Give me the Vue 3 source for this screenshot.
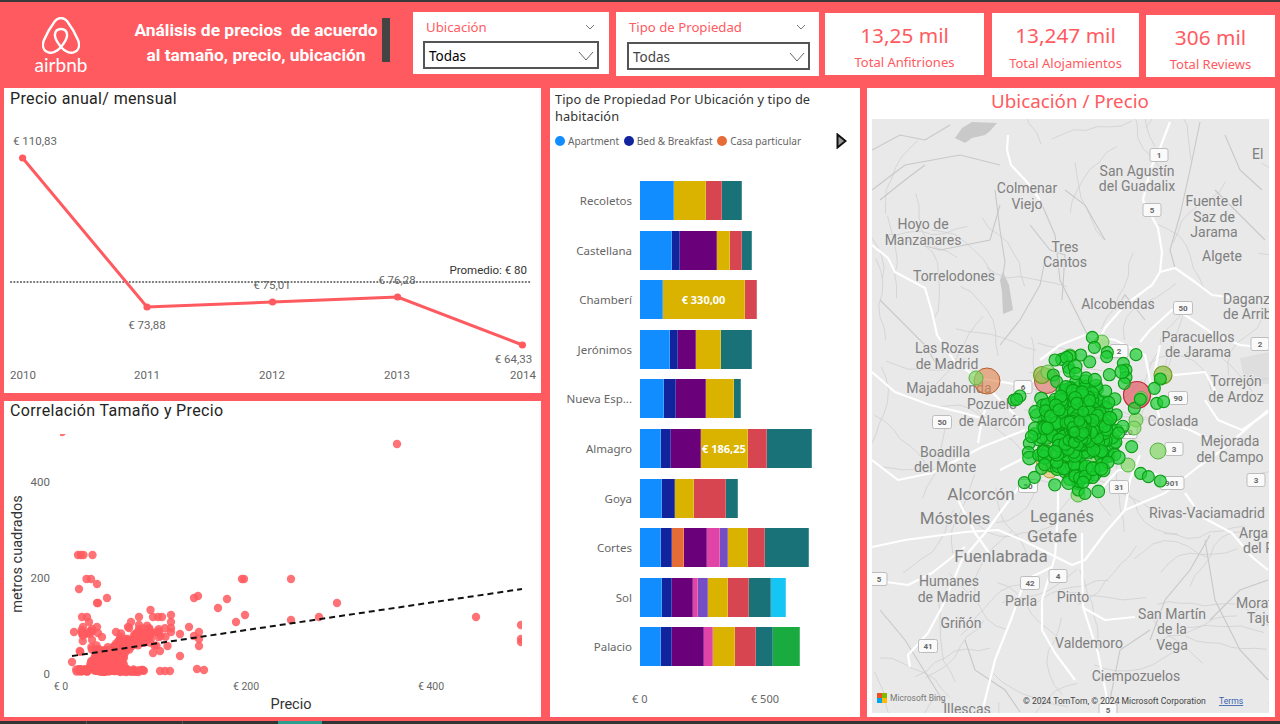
<template>
  <div class="page">
    <header class="header">
      <div class="brand">
        <div class="logo">
          <svg class="belo" viewBox="0 0 38 37" width="38" height="37">
            <path d="M19 30C15 35 9 37 5.5 35C1 33 0 28 2 23C5 16 10 8 13 4C15 1.5 17 1 19 1C21 1 23 1.5 25 4C28 8 33 16 36 23C38 28 37 33 32.5 35C29 37 23 35 19 30C14 24 12.5 20 13 17C13.5 13.5 16 12 19 12C22 12 24.5 13.5 25 17C25.5 20 24 24 19 30Z" />
          </svg>
          <span class="wordmark">airbnb</span>
        </div>
        <h1 class="title">Análisis de precios&nbsp; de acuerdo<br />al tamaño, precio, ubicación</h1>
        <div class="dark-bar"></div>
      </div>

      <div class="slicer slicer-a">
        <div class="slicer-head">
          <span>Ubicación</span>
          <svg viewBox="0 0 10 6" width="10" height="6"><polyline points="1,1 5,5 9,1" /></svg>
        </div>
        <div class="slicer-box">
          <span class="strong">Todas</span>
          <svg viewBox="0 0 16 10" width="16" height="10"><polyline points="1,1 8,9 15,1" /></svg>
        </div>
      </div>
      <div class="slicer slicer-b">
        <div class="slicer-head">
          <span>Tipo de Propiedad</span>
          <svg viewBox="0 0 10 6" width="10" height="6"><polyline points="1,1 5,5 9,1" /></svg>
        </div>
        <div class="slicer-box">
          <span>Todas</span>
          <svg viewBox="0 0 16 10" width="16" height="10"><polyline points="1,1 8,9 15,1" /></svg>
        </div>
      </div>

      <div v-for="k in kpis" :key="k.label" class="kpi" :class="k.cls">
        <div class="kpi-value">{{ k.value }}</div>
        <div class="kpi-label">{{ k.label }}</div>
      </div>
    </header>

    <main class="body">
      <div class="left">
        <section class="panel panel-line">
          <h2 class="din-title">Precio anual/ mensual</h2>
          <svg class="chart" viewBox="4 110 537 283" width="537" height="283">
            <line x1="11" y1="282" x2="531" y2="282" class="avg" />
            <text x="527" y="274" text-anchor="end" class="avg-text">Promedio: € 80</text>
            <polyline :points="linePoints" class="trend" />
            <circle v-for="p in lineData" :key="p.year" :cx="p.x" :cy="p.y" r="3.6" fill="#ff5a5f" />
            <text v-for="p in lineData" :key="'v' + p.year" :x="p.lx" :y="p.ly" text-anchor="middle" class="tick">{{ p.label }}</text>
            <text v-for="p in lineData" :key="'y' + p.year" :x="p.yx" y="379" text-anchor="middle" class="tick">{{ p.year }}</text>
          </svg>
        </section>

        <section class="panel panel-scatter">
          <h2 class="din-title scatter-title">Correlación Tamaño y Precio</h2>
          <svg class="chart" viewBox="4 423 537 294" width="537" height="294">
            <defs>
              <clipPath id="plot-clip"><rect x="60" y="434" width="462" height="245" /></clipPath>
            </defs>
            <g clip-path="url(#plot-clip)">
              <circle v-for="(p, i) in scatter" :key="i" :cx="p[0]" :cy="p[1]" r="4.2" class="dot" />
            </g>
            <line x1="72" y1="656" x2="522" y2="589" class="fit" />
            <text x="50" y="486" text-anchor="end" class="tick">400</text>
            <text x="50" y="582" text-anchor="end" class="tick">200</text>
            <text x="50" y="678" text-anchor="end" class="tick">0</text>
            <text x="61" y="690" text-anchor="middle" class="tick small">€ 0</text>
            <text x="246" y="690" text-anchor="middle" class="tick small">€ 200</text>
            <text x="431" y="690" text-anchor="middle" class="tick small">€ 400</text>
            <text x="291" y="709" text-anchor="middle" class="axis-name">Precio</text>
            <text transform="translate(22 554) rotate(-90)" text-anchor="middle" class="axis-name">metros cuadrados</text>
          </svg>
        </section>
      </div>

      <section class="panel panel-bars">
        <h2 class="bars-title">Tipo de Propiedad Por Ubicación y tipo de habitación</h2>
        <div class="legend">
          <span v-for="l in legend" :key="l.name" class="legend-item">
            <i class="legend-dot" :style="{ background: l.color }"></i>{{ l.name }}
          </span>
          <svg class="legend-next" viewBox="0 0 11 16" width="11" height="16">
            <path d="M1.5 1.5L9.5 8L1.5 14.5Z" />
          </svg>
        </div>
        <div class="rows">
          <div v-for="r in rows" :key="r.name" class="row">
            <span class="row-name">{{ r.name }}</span>
            <div class="stack">
              <div
                v-for="(s, i) in r.segs"
                :key="i"
                class="seg"
                :style="{ width: s[1] + 'px', background: colors[s[0]] }"
              >{{ s[2] }}</div>
            </div>
          </div>
        </div>
        <div class="bars-axis">
          <span>€ 0</span>
          <span>€ 500</span>
        </div>
      </section>

      <section class="panel panel-map">
        <h2 class="map-title">Ubicación / Precio</h2>
        <svg class="map" viewBox="872 119 397 594" width="397" height="594">
          <rect x="872" y="119" width="397" height="594" fill="#e9e9e9" />
          <polygon points="1240,358 1269,352 1269,384 1245,384" fill="#dedede" />
          <polygon points="955,138 962,128 972,122 997,123 990,131 985,135 972,138 965,143" fill="#c9c9c9" />
          <polygon points="1003,272 1009,285 1013,310 1003,314 1002,292 1000,280" fill="#c9c9c9" />
          <polyline v-for="(r, i) in walkers" :key="'w' + i" :points="r" class="road-faint" />
          <polyline v-for="(r, i) in minorRoads" :key="'m' + i" :points="r" class="road-minor" />
          <polyline v-for="(r, i) in majorRoads" :key="'r' + i" :points="r" class="road-major" />

          <text
            v-for="l in mapLabels"
            :key="l[0] + l[2]"
            :x="l[1]"
            :y="l[2]"
            :font-size="l[3]"
            :text-anchor="l[4] || 'middle'"
            class="place"
          >{{ l[0] }}</text>

          <g v-for="s in shields" :key="s[0] + '-' + s[1]">
            <rect :x="s[1] - s[3] / 2" :y="s[2] - 6.5" :width="s[3]" height="13" rx="2" class="shield" />
            <text :x="s[1]" :y="s[2] + 3" text-anchor="middle" class="shield-text">{{ s[0] }}</text>
          </g>

          <circle v-for="(c, i) in bubbles" :key="'b' + i" :cx="c[0]" :cy="c[1]" :r="c[2]" :class="c[3]" />

          <rect x="877" y="693" width="5" height="5" fill="#f25022" />
          <rect x="882" y="693" width="5" height="5" fill="#7fba00" />
          <rect x="877" y="698" width="5" height="5" fill="#00a4ef" />
          <rect x="882" y="698" width="5" height="5" fill="#ffb900" />
          <text x="890" y="701" class="bing">Microsoft Bing</text>
          <text x="1023" y="704" class="copyright">© 2024 TomTom, © 2024 Microsoft Corporation</text>
          <text x="1219" y="704" class="terms">Terms</text>
        </svg>
      </section>
    </main>

    <footer class="strip">
      <span class="tab-sep first"></span>
      <span class="tab-sep second"></span>
      <span class="tab-active"></span>
    </footer>
  </div>
</template>

<script setup>
const kpis = [
  { value: '13,25 mil', label: 'Total Anfitriones', cls: 'kpi-a' },
  { value: '13,247 mil', label: 'Total Alojamientos', cls: 'kpi-b' },
  { value: '306 mil', label: 'Total Reviews', cls: 'kpi-c' }
]

const lineData = [
  { year: 2010, x: 22.6, y: 158, label: '€ 110,83', lx: 35, ly: 145, yx: 23 },
  { year: 2011, x: 147, y: 307, label: '€ 73,88', lx: 147, ly: 329, yx: 147 },
  { year: 2012, x: 272.5, y: 302, label: '€ 75,01', lx: 272, ly: 289, yx: 272 },
  { year: 2013, x: 397.6, y: 297, label: '€ 76,28', lx: 397, ly: 284, yx: 397 },
  { year: 2014, x: 522.4, y: 345, label: '€ 64,33', lx: 513.5, ly: 363, yx: 523 }
]
const linePoints = lineData.map(p => p.x + ',' + p.y).join(' ')

const colors = {
  blue: '#118dff',
  navy: '#12239e',
  orange: '#e66c37',
  purple: '#6b007b',
  pink: '#e044a7',
  violet: '#744ec2',
  yellow: '#d9b300',
  red: '#d64550',
  teal: '#197278',
  cyan: '#15c6f4',
  green: '#1aab40'
}

const legend = [
  { name: 'Apartment', color: colors.blue },
  { name: 'Bed & Breakfast', color: colors.navy },
  { name: 'Casa particular', color: colors.orange }
]

const rows = [
  { name: 'Recoletos', segs: [['blue', 33.7], ['yellow', 32], ['red', 16], ['teal', 20.3]] },
  { name: 'Castellana', segs: [['blue', 32], ['navy', 8], ['purple', 37.3], ['yellow', 13], ['red', 12], ['teal', 9.7]] },
  { name: 'Chamberí', segs: [['blue', 22.7], ['yellow', 82.7, '€ 330,00'], ['red', 12]] },
  { name: 'Jerónimos', segs: [['blue', 29.7], ['navy', 8.3], ['purple', 17.7], ['yellow', 25], ['teal', 31]] },
  { name: 'Nueva Esp...', segs: [['blue', 24.3], ['navy', 11.7], ['purple', 29.7], ['yellow', 28], ['teal', 7]] },
  { name: 'Almagro', segs: [['blue', 21], ['navy', 10.3], ['purple', 30], ['yellow', 46.3, '€ 186,25'], ['red', 19.7], ['teal', 44.7]] },
  { name: 'Goya', segs: [['blue', 21.7], ['navy', 13], ['yellow', 19], ['red', 32], ['teal', 12.3]] },
  { name: 'Cortes', segs: [['blue', 21], ['navy', 10.7], ['orange', 12.3], ['purple', 22.7], ['pink', 13.7], ['violet', 7.7], ['yellow', 20], ['red', 17.3], ['teal', 43.7]] },
  { name: 'Sol', segs: [['blue', 21.7], ['navy', 10.3], ['purple', 20.7], ['pink', 5.3], ['violet', 9.7], ['yellow', 20.3], ['red', 20.7], ['teal', 22], ['cyan', 15.3]] },
  { name: 'Palacio', segs: [['blue', 20.7], ['navy', 11.3], ['purple', 31.7], ['pink', 9.3], ['yellow', 22], ['red', 20.7], ['teal', 17.3], ['green', 27.3]] }
]

function seeded(seed) {
  return () => {
    seed = (seed + 0x6d2b79f5) | 0
    let t = Math.imul(seed ^ (seed >>> 15), 1 | seed)
    t = (t + Math.imul(t ^ (t >>> 7), 61 | t)) ^ t
    return ((t ^ (t >>> 14)) >>> 0) / 4294967296
  }
}

// scatter: the points that stand alone, then the dense part near the origin
const scatter = [
  [62, 432], [397, 444], [92.5, 555], [78, 555], [81, 555], [83.5, 555], [86.5, 579], [91, 579], [97, 584], [79, 589],
  [107, 598], [97, 603], [98, 603], [198, 596], [194, 598], [227, 599], [218, 608], [242, 579], [244, 579], [291, 579],
  [245, 615], [236, 622], [291, 620], [319, 617], [337, 603], [476, 617], [521, 625], [521, 639], [521, 642],
  [171, 615], [171, 622], [171, 628], [171, 632], [180, 634], [189, 627], [199, 632], [194, 636], [199, 639], [199, 646],
  [180, 656], [160, 651], [153, 653], [167.5, 646], [197, 669], [204, 670], [160, 671], [165, 671], [170, 671],
  [150.5, 610], [139, 617], [153, 617], [158, 617], [162, 617], [131, 622], [116, 632], [102, 637], [74, 632], [82, 617],
  [87, 617], [89, 622], [83, 627], [97, 627], [92, 629], [139, 625], [139, 629], [128, 627], [72, 662]
]
{
  const r = seeded(11)
  for (let i = 0; i < 90; i++) scatter.push([76 + r() * 68, 669 + r() * 3])
  for (let i = 0; i < 150; i++) {
    const x = 90 + r() * 62
    scatter.push([x, 667 - (x - 90) * 0.55 - r() * 12 + r() * 8])
  }
  for (let i = 0; i < 70; i++) scatter.push([94 + r() * 30, 648 + r() * 22])
  for (let i = 0; i < 18; i++) scatter.push([78 + r() * 22, 630 + r() * 22])
  for (let i = 0; i < 24; i++) scatter.push([118 + r() * 48, 628 + r() * 18])
}

const majorRoads = [
  '1170,122 1165,135 1160,148 1150,170 1143,200 1158,228 1162,252 1160,272 1152,285 1125,305 1105,328 1098,342',
  '1008,135 1007,150 1011,165 1027,182 1040,200',
  '872,245 888,258 895,272 925,288 932,312 937,335 955,362 978,378 1020,385 1045,378',
  '1140,342 1150,330 1172,310 1185,315 1215,335 1240,345 1269,348',
  '1160,272 1175,268 1195,282 1212,295 1235,298 1268,302',
  '1040,360 1060,345 1085,335 1115,340 1145,355 1150,380 1160,420 1190,430 1210,440',
  '1082,533 1082,563 1083,607 1098,653 1106,693 1108,712',
  '872,547 905,540 965,532 998,530 1022,540 1072,565 1085,560 1105,533 1125,510 1165,493 1198,467 1222,450 1268,410',
  '872,460 898,480 932,473 982,447 1025,430',
  '910,667 908,655 928,633 942,607 962,560 985,533 1022,483',
  '1058,483 1058,510 1055,557 1042,600 1042,630 1055,653 1075,680',
  '982,712 995,660 1012,617 1025,580 1052,567',
  '1082,607 1105,620 1135,617',
  '958,500 975,533 992,557',
  '872,580 908,585 932,573 965,547',
  '1185,493 1202,517 1232,533 1252,557 1268,570',
  '1205,400 1218,420 1242,430 1268,412',
  '978,443 982,420 988,400',
  '872,372 895,392 930,405 960,412 988,420',
  '1100,490 1118,470 1145,470 1170,480',
  '1125,510 1130,480 1140,455',
  '1000,470 1030,455 1050,455',
  '985,385 1000,400 1020,420',
  '1160,345 1155,370 1175,375 1205,372 1220,400'
]
const minorRoads = [
  '872,150 900,135 925,140 950,125',
  '872,190 905,165 960,155 1000,165',
  '880,200 905,180 925,165',
  '995,190 1000,230 1005,262 1003,275',
  '1040,200 1055,235 1060,280 1075,310 1090,340',
  '1030,225 1050,250 1065,255 1062,300',
  '1065,190 1085,205 1105,240',
  '1200,122 1190,170 1180,215 1170,250 1175,268',
  '1225,135 1240,170 1262,190',
  '1215,190 1235,210 1265,240',
  '1000,345 1020,320 1040,285 1045,260',
  '880,300 900,320 925,345 940,370',
  '905,240 940,250 990,240 1000,205',
  '1115,310 1125,295 1145,320',
  '1150,640 1165,600 1190,570 1210,535',
  '1210,620 1240,590 1268,580',
  '1110,700 1120,650 1150,630',
  '880,610 905,640 930,680 950,712',
  '965,640 975,670 1005,690 1020,712',
  '1205,540 1215,600 1240,650 1268,680'
]

const walkers = []
{
  const r = seeded(77)
  for (let i = 0; i < 95; i++) {
    let x = 872 + r() * 397
    let y = 119 + r() * 594
    let a = r() * 6.28
    const pts = []
    for (let j = 0; j < 8; j++) {
      pts.push(x.toFixed(1) + ',' + y.toFixed(1))
      a += (r() - 0.5) * 0.9
      x += Math.cos(a) * 12
      y += Math.sin(a) * 12
    }
    walkers.push(pts.join(' '))
  }
}

const mapLabels = [
  ['El', 1252, 159, 14, 'start'],
  ['San Agustín', 1137, 176, 14],
  ['del Guadalix', 1137, 191, 14],
  ['Colmenar', 1027, 193, 14],
  ['Viejo', 1027, 209, 14],
  ['Hoyo de', 923, 229, 14],
  ['Manzanares', 923, 245, 14],
  ['Fuente el', 1214, 206, 14],
  ['Saz de', 1214, 222, 14],
  ['Jarama', 1214, 237, 14],
  ['Tres', 1065, 252, 14],
  ['Cantos', 1065, 267, 14],
  ['Torrelodones', 954, 281, 14],
  ['Algete', 1222, 261, 14],
  ['Alcobendas', 1118, 309, 14],
  ['Daganzo', 1223, 304, 14, 'start'],
  ['de Arriba', 1223, 319, 14, 'start'],
  ['Paracuellos', 1198, 342, 14],
  ['de Jarama', 1198, 357, 14],
  ['Las Rozas', 947, 353, 14],
  ['de Madrid', 947, 369, 14],
  ['Majadahonda', 949, 393, 14],
  ['Torrejón', 1236, 386, 14],
  ['de Ardoz', 1236, 402, 14],
  ['Pozuelo', 992, 409, 14],
  ['de Alarcón', 992, 426, 14],
  ['Coslada', 1173, 426, 14],
  ['Madrid', 1037, 433, 18, 'start'],
  ['Mejorada', 1230, 446, 14],
  ['del Campo', 1230, 462, 14],
  ['Boadilla', 945, 457, 14],
  ['del Monte', 945, 472, 14],
  ['Alcorcón', 981, 500, 17],
  ['Móstoles', 955, 524, 17],
  ['Leganés', 1062, 522, 17],
  ['Getafe', 1052, 542, 17],
  ['Fuenlabrada', 1001, 562, 17],
  ['Rivas-Vaciamadrid', 1149, 518, 14, 'start'],
  ['Arganda', 1239, 538, 14, 'start'],
  ['del Rey', 1243, 553, 14, 'start'],
  ['Humanes', 949, 586, 14],
  ['de Madrid', 949, 602, 14],
  ['Parla', 1021, 606, 14],
  ['Pinto', 1073, 602, 14],
  ['Griñón', 961, 628, 14],
  ['San Martín', 1172, 619, 14],
  ['de la', 1172, 634, 14],
  ['Vega', 1172, 650, 14],
  ['Valdemoro', 1089, 648, 14],
  ['Morata', 1236, 608, 14, 'start'],
  ['Tajuña', 1247, 623, 14, 'start'],
  ['Ciempozuelos', 1136, 681, 14],
  ['Illescas', 967, 714, 14]
]

const shields = [
  ['1', 1159, 155, 18], ['5', 1152, 210, 18], ['50', 1183, 308, 19], ['2', 1260, 344, 18], ['2', 1119, 351, 18],
  ['6', 1023, 387, 18], ['90', 1178, 398, 19], ['50', 942, 422, 19], ['3', 1174, 449, 18], ['3', 1256, 480, 18],
  ['31', 1119, 487, 19], ['901', 1172, 483, 24], ['50', 1028, 486, 19], ['5', 879, 579, 16], ['42', 1030, 583, 19],
  ['4', 1058, 576, 18], ['41', 928, 646, 19], ['5', 1108, 710, 18], ['20', 1128, 432, 18]
]

// bubbles: coloured ones at the bottom, loose green ones read off the picture, then the city cluster
const bubbles = [
  [987, 381, 13, 'b-salmon'], [1047, 381, 12.5, 'b-red'], [1137, 395, 13.5, 'b-crimson'], [1053, 415, 10, 'b-yellow'],
  [1048, 460, 12, 'b-yellow'], [1050, 470, 8, 'b-yellow'], [1163, 375, 9, 'b-olive'], [1042, 375, 8.5, 'b-olive'],
  [976, 378, 7, 'b-light'], [1048, 372, 7, 'b-light'], [1158, 451, 8, 'b-light'], [1128, 465, 7, 'b-light'],
  [1136, 420, 7, 'b-light'], [1134, 428, 7, 'b-light'], [1102, 342, 7, 'b-light'], [1070, 356, 7, 'b-light'],
  [1141, 398, 6.5, 'b-light'], [1078, 495, 7, 'b-light'], [1097, 463, 7, 'b-light'], [1045, 448, 7, 'b-light']
]
{
  const loose = [
    [277, 52], [283, 82], [322, 97], [408, 104], [242, 105], [210, 108], [185, 118], [165, 120], [370, 130], [378, 150],
    [378, 172], [373, 190], [481, 177], [463, 205], [470, 250], [491, 245], [403, 265], [421, 238], [395, 380],
    [422, 460], [445, 470], [481, 483], [73, 488], [103, 472], [233, 490], [235, 510], [255, 520], [88, 370], [85, 397],
    [42, 240], [60, 228], [50, 238], [320, 110], [160, 165], [170, 185], [150, 295], [140, 410], [155, 438], [125, 445]
  ]
  loose.forEach(p => bubbles.push([1000 + p[0] / 3, 320 + p[1] / 3, 6, 'b-green']))
  const r = seeded(5)
  const g = () => (r() + r() + r() + r() - 2) * 1.6
  // even fill of the blob, narrower towards the top as in the picture
  for (let i = 0; i < 130; i++) {
    const a = r() * 6.283
    const d = Math.sqrt(r())
    const y = Math.sin(a) * d * 52
    const squeeze = y < 0 ? 1 + y / 130 : 1
    bubbles.push([1080 + Math.cos(a) * d * 42 * squeeze, 430 + y, 6.2, 'b-green'])
  }
  for (let i = 0; i < 240; i++) {
    bubbles.push([1079 + g() * 21, 425 + g() * 26, 5.8 + r() * 1.2, 'b-green'])
  }
  for (let i = 0; i < 130; i++) {
    bubbles.push([1077 + g() * 5, 431 + g() * 7, 5.4, 'b-green'])
  }
}
</script>

<style>
html,
body {
  margin: 0;
  background: #ff5a5f;
}
</style>

<style scoped>
.page {
  width: 1280px;
  height: 724px;
  display: flex;
  flex-direction: column;
  overflow: hidden;
  background: #ff5a5f;
  border-top: 2px solid #3a3a3a;
  box-sizing: border-box;
  font-family: "Noto Sans", "Open Sans", sans-serif;
}

.header {
  height: 86px;
  display: flex;
  align-items: flex-start;
  flex-shrink: 0;
}

.brand {
  width: 413px;
  display: flex;
  align-items: flex-start;
}

.logo {
  width: 52px;
  margin: 15px 0 0 35px;
  display: flex;
  flex-direction: column;
  align-items: center;
}

.belo {
  display: block;
}

.belo path {
  fill: none;
  stroke: #fff;
  stroke-width: 2.4;
}

.wordmark {
  font-family: "Lato", sans-serif;
  font-size: 19px;
  line-height: 20px;
  color: #fff;
  margin-top: 1px;
}

.title {
  width: 260px;
  margin: 16px 0 0 39px;
  font-family: "Roboto", sans-serif;
  font-size: 17.4px;
  line-height: 25px;
  font-weight: 700;
  color: #fff;
  text-align: center;
  white-space: nowrap;
}

.dark-bar {
  width: 8px;
  height: 44px;
  margin: 16px 0 0 -4px;
  background: #444;
}

.slicer {
  background: #fff;
  box-sizing: border-box;
  margin-top: 10px;
  color: #ff5a5f;
}

.slicer-a {
  width: 196px;
  height: 62px;
  padding: 6px 10px 0;
}

.slicer-b {
  width: 203px;
  height: 64px;
  margin-left: 7px;
  padding: 6px 9px 0 11px;
}

.slicer-head {
  display: flex;
  justify-content: space-between;
  align-items: center;
  height: 18px;
  font-size: 13.2px;
  padding-right: 4px;
}

.slicer-a .slicer-head {
  padding-left: 3px;
}

.slicer-b .slicer-head {
  padding-left: 2px;
}

.slicer-head svg polyline {
  fill: none;
  stroke: #777;
}

.slicer-box {
  height: 28px;
  margin-top: 5px;
  border: 2px solid #555;
  box-sizing: border-box;
  display: flex;
  justify-content: space-between;
  align-items: center;
  padding: 2px 3px 0 4px;
  font-size: 13.5px;
  color: #444;
}

.slicer-b .slicer-box {
  margin-top: 6px;
}

.slicer-box .strong {
  color: #000;
}

.slicer-box svg polyline {
  fill: none;
  stroke: #666;
}

.kpi {
  background: #fff;
  box-sizing: border-box;
  color: #ff5a5f;
  text-align: center;
}

.kpi-value {
  font-size: 20.8px;
  line-height: 30px;
}

.kpi-label {
  font-size: 13px;
  line-height: 18px;
  margin-top: 3px;
}

.kpi-a {
  width: 159px;
  height: 62px;
  margin: 11px 0 0 6px;
  padding-top: 7px;
}

.kpi-b {
  width: 147px;
  height: 64px;
  margin: 11px 0 0 8px;
  padding-top: 7px;
}

.kpi-b .kpi-label {
  margin-top: 4px;
}

.kpi-c {
  width: 129px;
  height: 62px;
  margin: 13px 0 0 7px;
  padding-top: 7px;
}

.body {
  display: flex;
  align-items: flex-start;
  height: 629px;
  padding-left: 4px;
  flex-shrink: 0;
}

.left {
  width: 537px;
  height: 629px;
  display: flex;
  flex-direction: column;
  gap: 8px;
}

.panel {
  background: #fff;
  box-sizing: border-box;
}

.panel-line {
  height: 305px;
}

.panel-scatter {
  height: 316px;
}

.din-title {
  margin: 0;
  height: 22px;
  padding-left: 6px;
  font-family: "Roboto", sans-serif;
  font-size: 16px;
  line-height: 21px;
  font-weight: 400;
  color: #252423;
  letter-spacing: 0.35px;
  white-space: nowrap;
}

.scatter-title {
  line-height: 19px;
}

.chart {
  display: block;
}

.avg {
  stroke: #707070;
  stroke-width: 2.2;
  stroke-dasharray: 0.1 3.2;
  stroke-linecap: round;
}

.avg-text {
  font-family: "Roboto", sans-serif;
  font-size: 11.5px;
  fill: #333;
}

.trend {
  fill: none;
  stroke: #ff5a5f;
  stroke-width: 3;
}

.tick {
  font-family: "Roboto", sans-serif;
  font-size: 11.5px;
  fill: #666;
}

.tick.small {
  font-size: 10.5px;
}

.dot {
  fill: #ff5a5f;
  fill-opacity: 0.85;
}

.fit {
  stroke: #111;
  stroke-width: 2;
  stroke-dasharray: 6 4;
}

.axis-name {
  font-family: "Roboto", sans-serif;
  font-size: 14.5px;
  fill: #333;
}

.panel-bars {
  width: 310px;
  height: 629px;
  margin-left: 9px;
  display: flex;
  flex-direction: column;
}

.bars-title {
  margin: 0;
  padding: 3px 30px 0 5px;
  font-size: 12.8px;
  line-height: 17px;
  font-weight: 400;
  color: #333;
  letter-spacing: 0.1px;
}

.legend {
  display: flex;
  align-items: center;
  height: 16px;
  margin: 8px 0 0 5px;
  font-size: 10.1px;
  color: #666;
  white-space: nowrap;
}

.legend-item {
  display: flex;
  align-items: center;
  margin-right: 4.5px;
}

.legend-dot {
  width: 10px;
  height: 10px;
  border-radius: 50%;
  margin-right: 3px;
}

.legend-next {
  margin-left: auto;
  margin-right: 13px;
}

.legend-next path {
  fill: #999;
  stroke: #111;
  stroke-width: 2;
}

.rows {
  margin-top: 32px;
  display: flex;
  flex-direction: column;
  gap: 10.6px;
}

.row {
  display: flex;
  align-items: center;
  height: 39px;
}

.row-name {
  width: 82px;
  text-align: right;
  font-size: 11.5px;
  color: #666;
  white-space: nowrap;
}

.stack {
  display: flex;
  height: 39px;
  margin-left: 8px;
}

.seg {
  height: 39px;
  box-sizing: border-box;
  border-right: 1px solid rgba(255, 255, 255, 0.22);
  display: flex;
  align-items: center;
  justify-content: center;
  font-size: 11px;
  font-weight: 700;
  color: #fff;
  white-space: nowrap;
  overflow: hidden;
}

.bars-axis {
  margin: 25px 0 0 82px;
  width: 147px;
  display: flex;
  justify-content: space-between;
  font-size: 11px;
  line-height: 16px;
  color: #666;
}

.panel-map {
  width: 408px;
  height: 629px;
  margin-left: 7px;
  padding-left: 5px;
}

.map-title {
  margin: 0;
  height: 31px;
  padding-right: 7px;
  font-size: 18.8px;
  line-height: 27px;
  font-weight: 400;
  color: #ff5a5f;
  text-align: center;
}

.map {
  display: block;
}

.road-faint {
  fill: none;
  stroke: #d3d3d3;
  stroke-width: 0.9;
}

.road-minor {
  fill: none;
  stroke: #c8c8c8;
  stroke-width: 1.1;
}

.road-major {
  fill: none;
  stroke: #fff;
  stroke-width: 2.2;
  stroke-linejoin: round;
}

.place {
  font-family: "Roboto", sans-serif;
  fill: #808080;
  stroke: #e9e9e9;
  stroke-width: 2;
  paint-order: stroke;
}

.shield {
  fill: #fafafa;
  stroke: #bdbdbd;
}

.shield-text {
  font-family: "Roboto", sans-serif;
  font-size: 8px;
  font-weight: 700;
  fill: #666;
}

.b-green {
  fill: rgba(25, 205, 50, 0.7);
  stroke: #0b9c14;
  stroke-width: 1.1;
}

.b-light {
  fill: rgba(130, 215, 100, 0.7);
  stroke: #55b545;
  stroke-width: 1;
}

.b-olive {
  fill: rgba(140, 190, 70, 0.75);
  stroke: #6f9a1e;
  stroke-width: 1.2;
}

.b-salmon {
  fill: rgba(225, 130, 75, 0.6);
  stroke: #b5602f;
  stroke-width: 1;
}

.b-red {
  fill: rgba(225, 110, 100, 0.6);
  stroke: #b54a3f;
  stroke-width: 1;
}

.b-crimson {
  fill: rgba(225, 90, 100, 0.7);
  stroke: #c02a3a;
  stroke-width: 1.2;
}

.b-yellow {
  fill: rgba(230, 190, 90, 0.6);
  stroke: #c09a35;
  stroke-width: 1;
}

.bing {
  font-family: "Roboto", sans-serif;
  font-size: 8.5px;
  fill: #777;
}

.copyright {
  font-family: "Roboto", sans-serif;
  font-size: 8.6px;
  fill: #444;
}

.terms {
  font-family: "Roboto", sans-serif;
  font-size: 8.6px;
  fill: #3a5fb0;
  text-decoration: underline;
}

.strip {
  flex: 1;
  margin-top: 4px;
  background: #333;
  display: flex;
}

.tab-sep {
  width: 1px;
  background: #555;
}

.tab-sep.first {
  margin-left: 86px;
}

.tab-sep.second {
  margin-left: 95px;
}

.tab-active {
  width: 44px;
  margin-left: 95px;
  background: #2a9d8f;
}
</style>
